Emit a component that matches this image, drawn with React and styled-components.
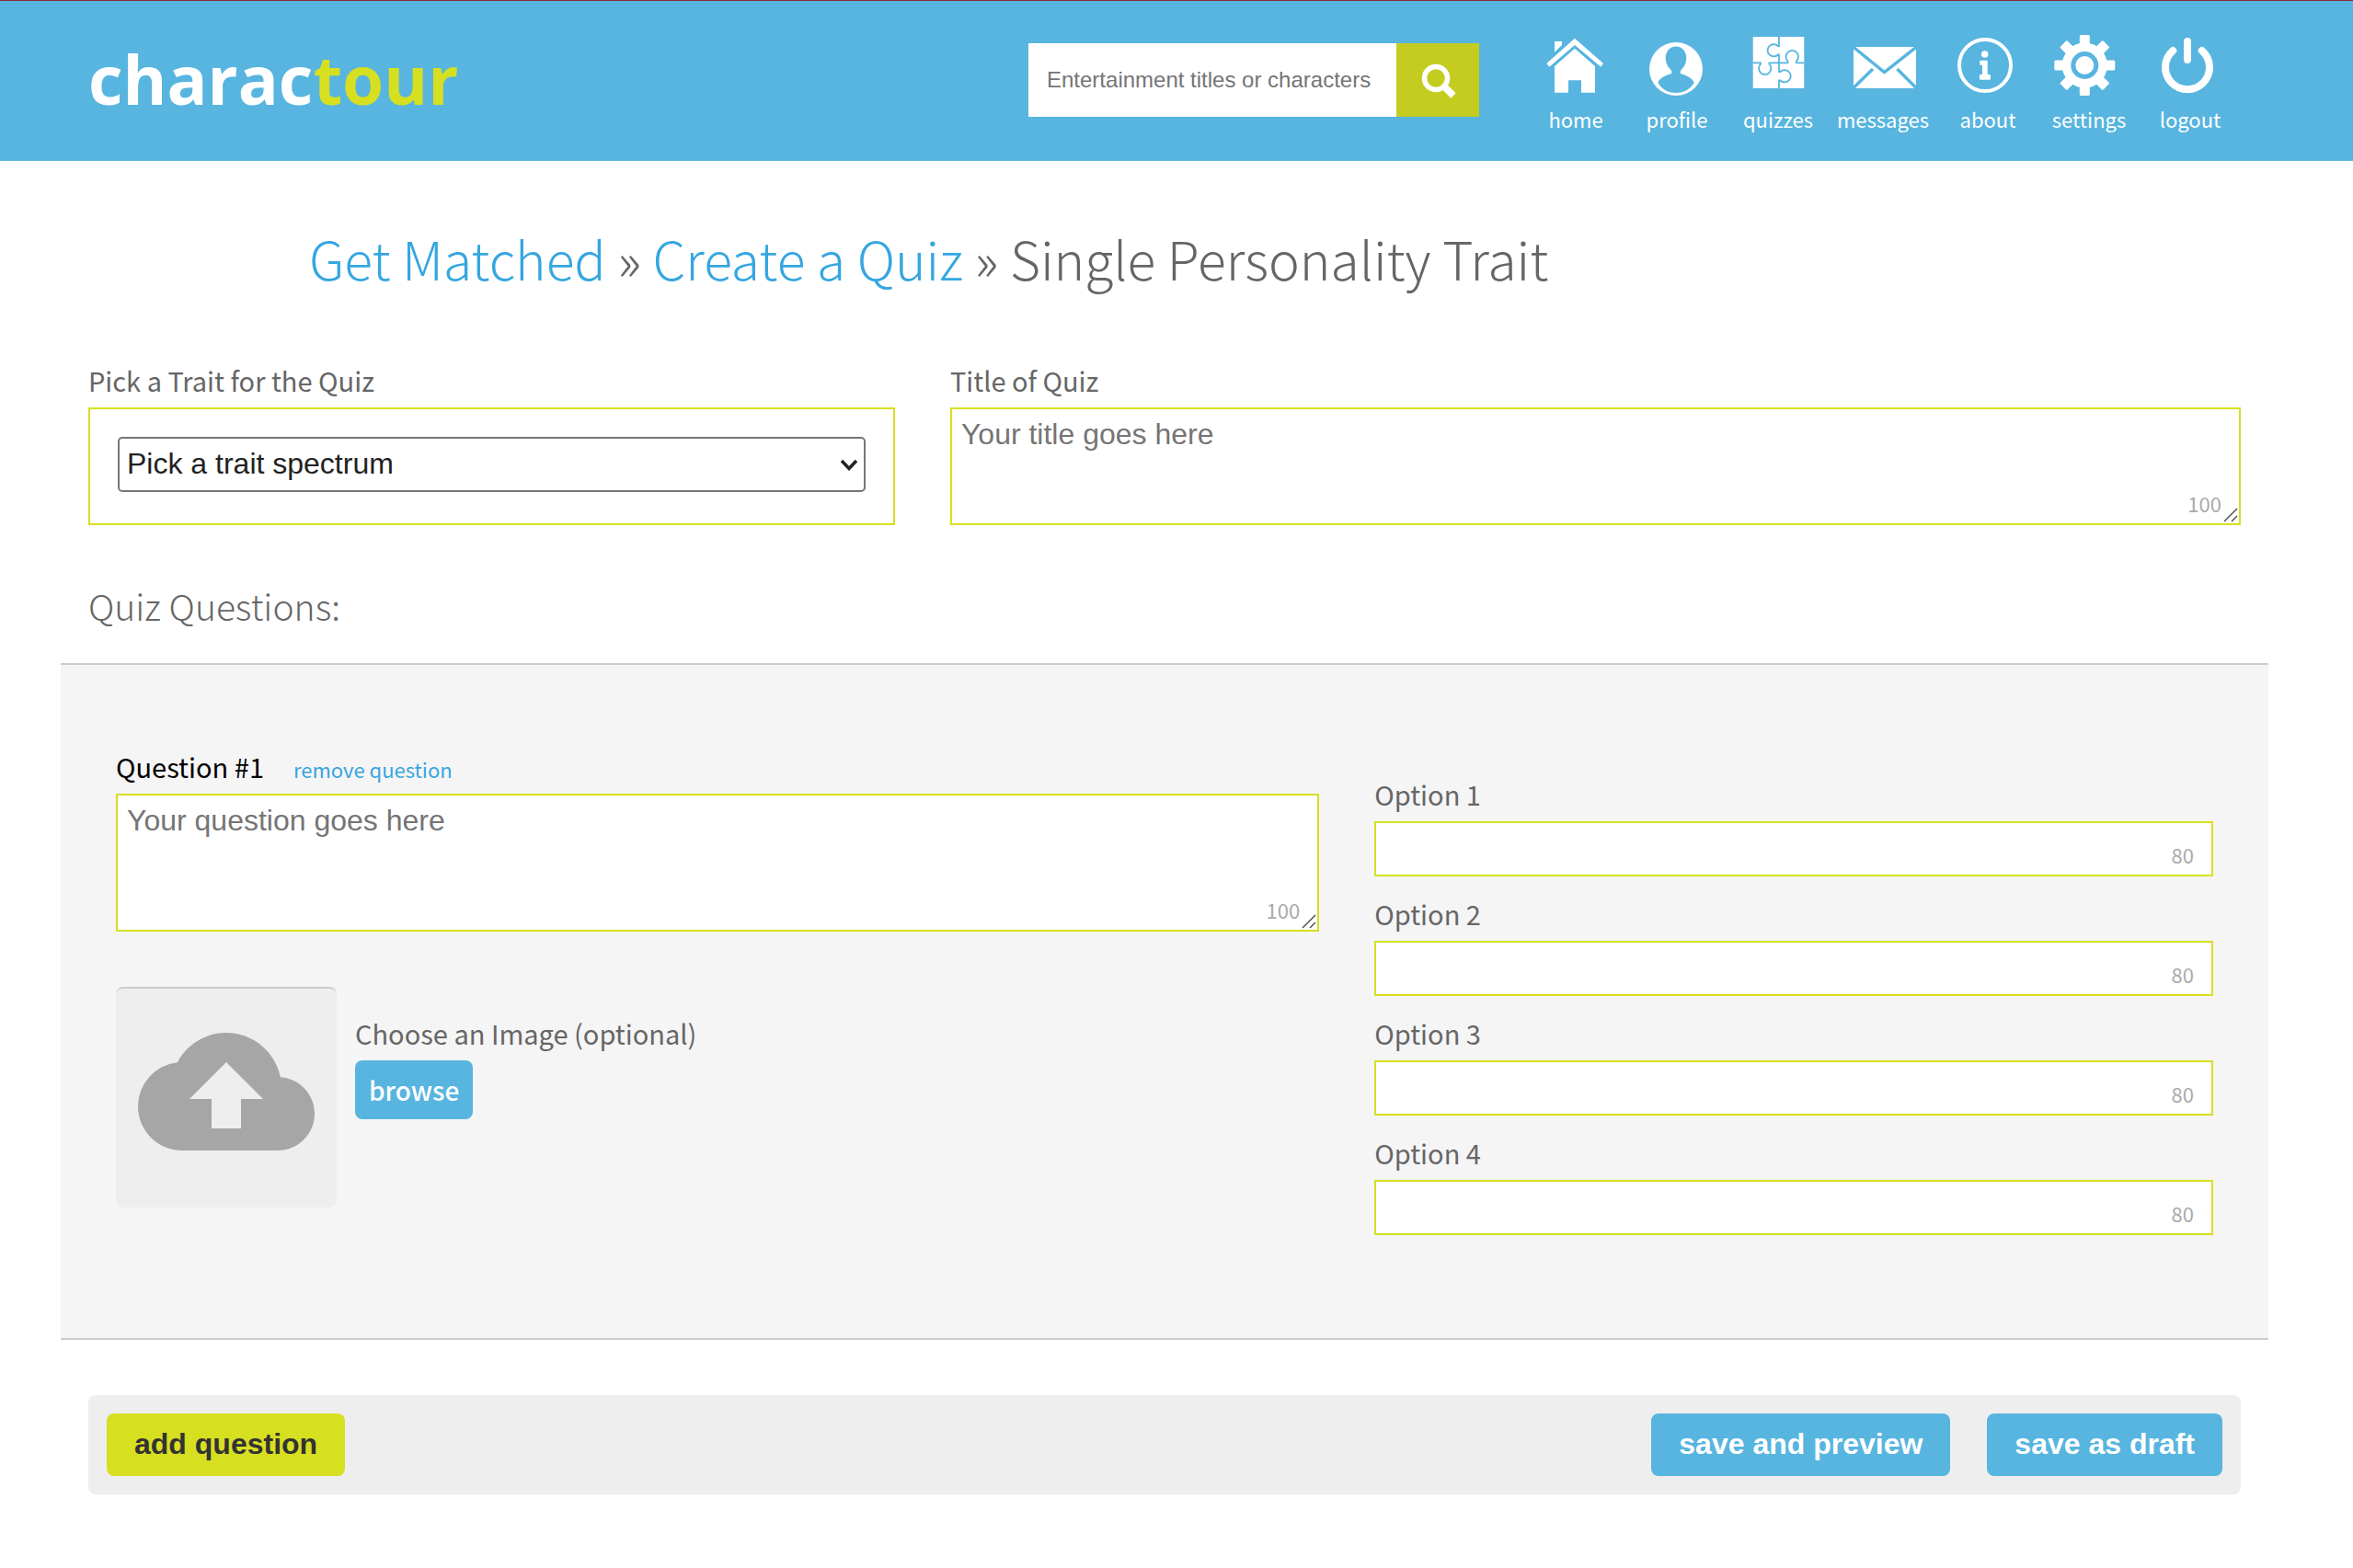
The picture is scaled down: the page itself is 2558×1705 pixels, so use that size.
import React from 'react';
import styled, { createGlobalStyle } from 'styled-components';
import { MdCloudUpload } from 'react-icons/md';

const blue = '#57b5df';
const linkBlue = '#36a6e0';
const lime = '#d7df21';
const grey = '#666';
const sourceFont = '"Noto Sans CJK SC", "Noto Sans", sans-serif';
const formFont = '"Liberation Sans", Arial, sans-serif';

const GlobalStyle = createGlobalStyle`
  *, *:before, *:after {
    box-sizing: border-box;
  }
  body {
    margin: 0;
    background: #fff;
    color: ${grey};
    font-family: ${sourceFont};
  }
  a {
    color: ${linkBlue};
    text-decoration: none;
  }
  svg {
    display: block;
  }
`;

const Header = styled.header`
  padding-right: 26px;
  background: ${blue};
  border-top: 1px solid #8c2b2f;
`;

const HeaderInner = styled.div`
  display: flex;
  align-items: flex-start;
  max-width: 2400px;
  height: 174px;
  margin: 0 auto;
  padding: 0 30px;
`;

const Logo = styled.a`
  margin-top: 40px;
  color: #fff;
  font-family: "Open Sans", "Noto Sans", sans-serif;
  font-size: 73px;
  font-weight: 700;
  line-height: 90px;
  span {
    color: ${lime};
  }
`;

const SearchForm = styled.form`
  display: flex;
  height: 80px;
  margin: 46px 50px 0 auto;
`;

const SearchInput = styled.input`
  width: 400px;
  padding: 0 20px;
  border: 0;
  border-radius: 0;
  background: #fff;
  font-family: ${formFont};
  font-size: 24px;
  &::placeholder {
    color: #757575;
  }
`;

const SearchButton = styled.button`
  display: flex;
  align-items: center;
  justify-content: center;
  width: 90px;
  padding: 2px 0 0 2px;
  border: 0;
  background: #c4cd1f;
`;

const Nav = styled.nav`
  display: flex;
  padding-top: 37px;
`;

const NavItem = styled.a`
  display: flex;
  flex-direction: column;
  align-items: center;
  gap: 9px;
  width: ${(props) => (props.$wide ? '118px' : '110px')};
  color: #fff;
  font-size: 22px;
  line-height: 32px;
`;

const Page = styled.main`
  padding: 70px 26px 80px 0;
`;

const Container = styled.div`
  max-width: 2400px;
  margin: 0 auto;
`;

const Section = styled.section`
  padding: 0 30px;
`;

const Breadcrumb = styled.h1`
  margin: 0 0 80px;
  padding-left: 240px;
  font-size: 57px;
  font-weight: 300;
  line-height: 70px;
`;

const TraitRow = styled.div`
  display: grid;
  grid-template-columns: 5fr 8fr;
  gap: 60px;
`;

const Field = styled.div`
  display: flex;
  flex-direction: column;
  gap: 12px;
`;

const Label = styled.label`
  color: ${(props) => (props.$dark ? '#000' : grey)};
  font-size: 29px;
  line-height: 36px;
`;

const SelectBox = styled.div`
  height: 128px;
  padding: 30px;
  border: 2px solid ${lime};
`;

const SelectWrap = styled.div`
  position: relative;
  svg {
    position: absolute;
    top: 24px;
    right: 8px;
    pointer-events: none;
  }
`;

const Select = styled.select`
  width: 100%;
  height: 60px;
  padding: 0 8px 2px;
  appearance: none;
  border: 2px solid #767676;
  border-radius: 5px;
  background: #fff;
  color: #222;
  font-family: ${formFont};
  font-size: 32px;
`;

const CountedBox = styled.div`
  position: relative;
`;

const TextArea = styled.textarea`
  display: block;
  width: 100%;
  height: ${(props) => props.$height};
  padding: 8px 10px;
  resize: none;
  border: 2px solid ${lime};
  border-radius: 0;
  background: #fff;
  font-family: ${formFont};
  font-size: 32px;
  line-height: 38px;
  &::placeholder {
    color: #757575;
  }
`;

const TextInput = styled.input`
  display: block;
  width: 100%;
  height: 60px;
  padding: 0 60px 0 10px;
  border: 2px solid ${lime};
  border-radius: 0;
  background: #fff;
  font-family: ${formFont};
  font-size: 32px;
`;

const Counter = styled.span`
  position: absolute;
  right: 21px;
  bottom: 8px;
  color: #aaa;
  font-size: 22px;
  line-height: 32px;
  pointer-events: none;
`;

const Grip = styled.svg`
  position: absolute;
  right: 3px;
  bottom: 3px;
`;

const SectionTitle = styled.h2`
  margin: 62px 0 38px;
  font-size: 39px;
  font-weight: 300;
  line-height: 50px;
`;

const QuestionPanel = styled.section`
  display: grid;
  grid-template-columns: 33fr 23fr;
  gap: 60px;
  padding: 92px 60px 112px;
  border-top: 2px solid #ccc;
  border-bottom: 2px solid #ccc;
  background: #f5f5f5;
`;

const QuestionHead = styled.div`
  display: flex;
  align-items: baseline;
  gap: 32px;
  height: 36px;
`;

const RemoveLink = styled.a`
  font-size: 22px;
  line-height: 28px;
`;

const Upload = styled.div`
  display: flex;
  gap: 20px;
  margin-top: 60px;
`;

const Preview = styled.div`
  display: flex;
  justify-content: center;
  width: 240px;
  height: 240px;
  padding-top: 16px;
  border-top: 2px solid #ccc;
  border-radius: 8px;
  background: #eee;
  color: #a6a6a6;
`;

const UploadControls = styled.div`
  display: flex;
  flex-direction: column;
  align-items: flex-start;
  gap: 12px;
  padding-top: 32px;
`;

const Options = styled.div`
  display: flex;
  flex-direction: column;
  gap: 22px;
  padding-top: 30px;
`;

const Button = styled.button`
  height: 68px;
  padding: 0 30px 2px;
  border: 0;
  border-radius: 8px;
  background: ${(props) => (props.$lime ? lime : blue)};
  color: ${(props) => (props.$lime ? '#333' : '#fff')};
  font-family: ${formFont};
  font-size: 32px;
  font-weight: 700;
`;

const BrowseButton = styled(Button)`
  height: 64px;
  padding: 0 15px;
  font-family: ${sourceFont};
  font-size: 28px;
  font-weight: 500;
`;

const ActionBar = styled.div`
  display: flex;
  gap: 40px;
  margin: 60px 30px 0;
  padding: 20px;
  border-radius: 8px;
  background: #eee;
  button:first-child {
    margin-right: auto;
  }
`;

const icons = {
  home: (
    <>
      <path d="M37 3.7 68 31 65.3 34.7 37 11 9.3 34.7 6.3 31z" />
      <path d="M15 7h8v4l-8 7.7z" />
      <path d="M37 14.7 59 34v28.7H44V49.3H30v13.4H15V34z" />
    </>
  ),
  profile: (
    <>
      <circle cx="37" cy="37" r="29" />
      <path
        fill={blue}
        d="M37 12.5c-7 0-11.3 6-11.3 12.5 0 5 2 9.5 5.3 12.5 1.5 1.5 1.8 3.5.8 4.8-5.5 1.2-12 4.5-14.5 9.2C20.5 58.5 28.5 63 37 63s16.5-4.5 19.7-11.5c-2.5-4.7-9-8-14.5-9.2-1-1.3-.7-3.3.8-4.8 3.3-3 5.3-7.5 5.3-12.5 0-6.5-4.3-12.5-11.3-12.5z"
      />
    </>
  ),
  quizzes: (
    <>
      <path d="M10.7 2h55.6v56H10.7z" />
      <path
        fill="none"
        stroke={blue}
        strokeWidth="1.8"
        d="M39 2V12H38A6.7 6.7 0 1 0 38 21.5H39V40H40.3A6.7 6.7 0 1 1 40.3 49.5H39V58M10.7 30.3H19V31.6A6.7 6.7 0 1 0 28.4 31.6V30.3H48.5V28.4A6.7 6.7 0 1 1 58 28.4V30.3H66.3"
      />
    </>
  ),
  messages: (
    <>
      <path d="M6 13h68v45H6z" />
      <path
        fill="none"
        stroke={blue}
        strokeWidth="3.4"
        d="M5 12.5 39.5 40.5 75 12.5M27 37 5 58.5M53.5 37 75 58.5"
      />
    </>
  ),
  about: (
    <>
      <circle cx="35" cy="33" r="28" fill="none" stroke="#fff" strokeWidth="4" />
      <circle cx="34.7" cy="21" r="3.8" />
      <path d="M30.3 27.7h6.4a1 1 0 0 1 1 1V43H40a1 1 0 0 1 1 1v3.7a1 1 0 0 1-1 1H30a1 1 0 0 1-1-1V44a1 1 0 0 1 1-1h2V33h-1.7a1 1 0 0 1-1-1v-3.3a1 1 0 0 1 1-1z" />
    </>
  ),
  settings: (
    <>
      <circle cx="33.3" cy="33" r="24.5" />
      {[0, 45, 90, 135].map((angle) => (
        <rect
          key={angle}
          x="27.8"
          y="0"
          width="11"
          height="66"
          rx="1.5"
          transform={`rotate(${angle} 33.3 33)`}
        />
      ))}
      <circle cx="33.3" cy="33" r="12.5" stroke={blue} strokeWidth="5" />
    </>
  ),
  logout: (
    <g fill="none" stroke="#fff" strokeWidth="8" strokeLinecap="round">
      <path d="M19.3 17A24 24 0 1 0 50.7 17" />
      <path d="M35 7v20" />
    </g>
  ),
};

const CountedTextArea = ({ id, height, placeholder }) => (
  <CountedBox>
    <TextArea id={id} $height={height} placeholder={placeholder} maxLength={100} />
    <Counter>100</Counter>
    <Grip width="16" height="16" viewBox="0 0 16 16" stroke="#555" strokeWidth="1.5">
      <path d="M1 15 15 1M9 15l6-6" />
    </Grip>
  </CountedBox>
);

class App extends React.Component {
  constructor(props) {
    super(props);
    this.state = {
      options: [1, 2, 3, 4],
    };
  }

  render() {
    const { options } = this.state;
    return (
      <>
        <GlobalStyle />
        <Header>
          <HeaderInner>
            <Logo href="#">charac<span>tour</span></Logo>
            <SearchForm>
              <SearchInput
                type="text"
                aria-label="Search"
                placeholder="Entertainment titles or characters"
              />
              <SearchButton type="button" aria-label="Search">
                <svg width="38" height="38" viewBox="0 0 38 38" fill="none" stroke="#fff">
                  <circle cx="16" cy="16" r="12.5" strokeWidth="5.5" />
                  <path d="M25 25l10 10" strokeWidth="7.5" />
                </svg>
              </SearchButton>
            </SearchForm>
            <Nav>
              {Object.keys(icons).map((name) => (
                <NavItem href="#" key={name} $wide={name === 'messages'}>
                  <svg width="76" height="66" viewBox="0 0 76 66" fill="#fff">
                    {icons[name]}
                  </svg>
                  {name}
                </NavItem>
              ))}
            </Nav>
          </HeaderInner>
        </Header>
        <Page>
          <Container>
            <Section>
              <Breadcrumb>
                <a href="#">Get Matched</a> » <a href="#">Create a Quiz</a> » Single Personality Trait
              </Breadcrumb>
              <TraitRow>
                <Field>
                  <Label htmlFor="trait">Pick a Trait for the Quiz</Label>
                  <SelectBox>
                    <SelectWrap>
                      <Select id="trait">
                        <option>Pick a trait spectrum</option>
                      </Select>
                      <svg width="20" height="14" viewBox="0 0 20 14" fill="none" stroke="#222" strokeWidth="3.5">
                        <path d="M2 2l8 8.5L18 2" />
                      </svg>
                    </SelectWrap>
                  </SelectBox>
                </Field>
                <Field>
                  <Label htmlFor="title">Title of Quiz</Label>
                  <CountedTextArea id="title" height="128px" placeholder="Your title goes here" />
                </Field>
              </TraitRow>
              <SectionTitle>Quiz Questions:</SectionTitle>
            </Section>
            <QuestionPanel>
              <div>
                <Field>
                  <QuestionHead>
                    <Label htmlFor="question" $dark>Question #1</Label>
                    <RemoveLink href="#">remove question</RemoveLink>
                  </QuestionHead>
                  <CountedTextArea id="question" height="150px" placeholder="Your question goes here" />
                </Field>
                <Upload>
                  <Preview>
                    <MdCloudUpload size={192} />
                  </Preview>
                  <UploadControls>
                    <Label htmlFor="browse">Choose an Image (optional)</Label>
                    <BrowseButton id="browse" type="button">browse</BrowseButton>
                  </UploadControls>
                </Upload>
              </div>
              <Options>
                {options.map((number) => (
                  <Field key={number}>
                    <Label htmlFor={`option${number}`}>{`Option ${number}`}</Label>
                    <CountedBox>
                      <TextInput id={`option${number}`} type="text" maxLength={80} />
                      <Counter>80</Counter>
                    </CountedBox>
                  </Field>
                ))}
              </Options>
            </QuestionPanel>
            <ActionBar>
              <Button type="button" $lime>add question</Button>
              <Button type="button">save and preview</Button>
              <Button type="button">save as draft</Button>
            </ActionBar>
          </Container>
        </Page>
      </>
    );
  }
}

export default App;
